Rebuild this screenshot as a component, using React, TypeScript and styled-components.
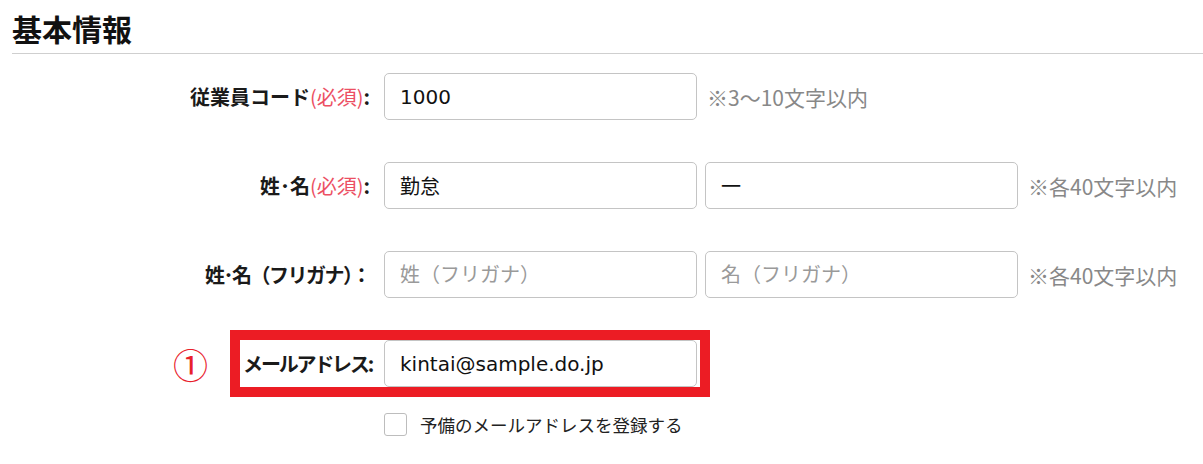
import React from 'react';
import styled, { createGlobalStyle } from 'styled-components';

const GlobalStyle = createGlobalStyle`
  body {
    margin: 0;
    background: #fff;
    font-family: "Noto Sans CJK JP", "Noto Sans", sans-serif;
    color: #222;
  }
`;

type FieldProps = {
  label: string;
  required?: boolean;
  tight?: boolean;
  values: { value?: string; placeholder?: string }[];
  hint?: string;
};

const Field: React.FC<FieldProps> = ({ label, required, tight, values, hint }) => (
  <Row>
    <Label $tight={tight}>
      {label}
      {required ? <Required>(必須)</Required> : null}
      {label.endsWith('）') ? '：' : ':'}
    </Label>
    {values.map((v, i) => (
      <TextField key={i} type="text" defaultValue={v.value} placeholder={v.placeholder} />
    ))}
    {hint ? <Hint>{hint}</Hint> : null}
  </Row>
);

const App: React.FC = () => {
  return (
    <Page>
      <GlobalStyle />
      <Heading>基本情報</Heading>
      <Form>
        <Field label="従業員コード" required values={[{ value: '1000' }]} hint="※3～10文字以内" />
        <Field label="姓･名" required values={[{ value: '勤怠' }, { value: '一' }]} hint="※各40文字以内" />
        <Field
          label="姓･名（フリガナ）"
          tight
          values={[{ placeholder: '姓（フリガナ）' }, { placeholder: '名（フリガナ）' }]}
          hint="※各40文字以内"
        />
        <EmailRow>
          <Marker>①</Marker>
          <Highlight>
            <EmailLabel>メールアドレス:</EmailLabel>
            <TextField type="email" defaultValue="kintai@sample.do.jp" />
          </Highlight>
        </EmailRow>
        <CheckRow>
          <CheckBox type="checkbox" id="sub-mail" />
          <CheckLabel htmlFor="sub-mail">予備のメールアドレスを登録する</CheckLabel>
        </CheckRow>
      </Form>
    </Page>
  );
};

export default App;

const Page = styled.div`
  width: 1203px;
  height: 464px;
  overflow: hidden;
`;

const Heading = styled.h2`
  margin: 0 0 0 12px;
  padding: 13px 0 10px;
  font-size: 30px;
  line-height: 30px;
  font-weight: 700;
  color: #111;
  border-bottom: 1px solid #cfcfcf;
`;

const Form = styled.div`
  display: flex;
  flex-direction: column;
  padding-top: 19px;
`;

const Row = styled.div`
  display: flex;
  align-items: center;
  height: 47px;
  margin-bottom: 42px;
`;

const Label = styled.span<{ $tight?: boolean }>`
  width: 384px;
  box-sizing: border-box;
  padding-right: 14px;
  text-align: right;
  font-size: 20px;
  font-weight: 700;
  letter-spacing: ${p => (p.$tight ? '-1.5px' : '0')};
  color: #1a1a1a;
  white-space: nowrap;
`;

const Required = styled.span`
  color: #ec4f63;
  font-weight: 400;
`;

const TextField = styled.input`
  width: 313px;
  height: 47px;
  box-sizing: border-box;
  margin: 0 8px 0 0;
  padding: 0 15px;
  border: 1px solid #c4c4c4;
  border-radius: 5px;
  font-family: "DejaVu Sans", "Noto Sans CJK JP", sans-serif;
  font-size: 20px;
  color: #111;
  background: #fff;
  outline: none;

  &::placeholder {
    font-family: "Noto Sans CJK JP", sans-serif;
    color: #9a9a9a;
  }
`;

const Hint = styled.span`
  margin-left: 2px;
  font-size: 21px;
  color: #888;
  white-space: nowrap;
`;

const EmailRow = styled.div`
  display: flex;
  align-items: center;
  margin-top: -10px;
`;

const Marker = styled.span`
  width: 230px;
  box-sizing: border-box;
  padding-left: 173px;
  font-size: 35px;
  line-height: 1;
  color: #e8212b;
`;

const Highlight = styled.div`
  display: flex;
  align-items: center;
  border: 10px solid #ec1c24;
  padding: 0 3px 0 0;

  ${TextField} {
    margin: 0;
  }
`;

const EmailLabel = styled.span`
  width: 144px;
  box-sizing: border-box;
  padding-right: 12px;
  text-align: right;
  font-size: 20px;
  font-weight: 700;
  letter-spacing: -2.2px;
  color: #1a1a1a;
  white-space: nowrap;
`;

const CheckRow = styled.div`
  display: flex;
  align-items: center;
  padding-left: 384px;
  margin-top: 15px;
`;

const CheckBox = styled.input`
  appearance: none;
  width: 23px;
  height: 23px;
  margin: 0 13px 0 0;
  border: 1px solid #bdbdbd;
  border-radius: 3px;
  background: #fff;
`;

const CheckLabel = styled.label`
  font-size: 17.5px;
  color: #222;
`;
